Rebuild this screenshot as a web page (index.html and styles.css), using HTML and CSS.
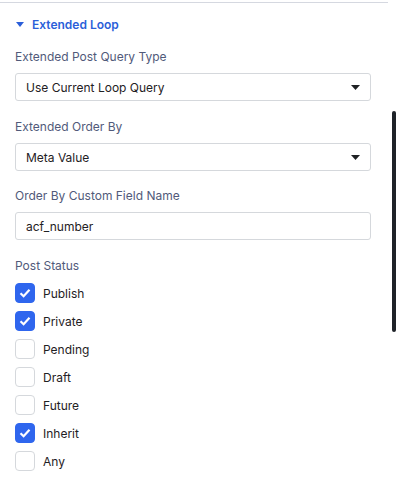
FILE: index.html
```html
<!DOCTYPE html>
<html>
<head>
<meta charset="utf-8">
<link rel="stylesheet" href="styles.css">
</head>
<body>
<div class="panel">
  <div class="section">
    <div class="section-head">
      <svg class="caret" width="8" height="5" viewBox="0 0 8 5"><path d="M0 0H8L4 5Z" fill="#2b5fd9"/></svg>
      <span>Extended Loop</span>
    </div>
    <div class="field">
      <div class="label">Extended Post Query Type</div>
      <div class="select"><span>Use Current Loop Query</span><svg width="9" height="5" viewBox="0 0 9 5"><path d="M0 0H9L4.5 5Z" fill="#1f2124"/></svg></div>
    </div>
    <div class="field">
      <div class="label">Extended Order By</div>
      <div class="select"><span>Meta Value</span><svg width="9" height="5" viewBox="0 0 9 5"><path d="M0 0H9L4.5 5Z" fill="#1f2124"/></svg></div>
    </div>
    <div class="field">
      <div class="label tight">Order By Custom Field Name</div>
      <div class="input">acf_number</div>
    </div>
    <div class="field">
      <div class="label">Post Status</div>
      <div class="checks">
        <div class="check"><span class="box on"><svg width="12" height="10" viewBox="0 0 12 10"><path d="M1.5 5.2L4.6 8.2L10.5 1.8" fill="none" stroke="#fff" stroke-width="2.2"/></svg></span>Publish</div>
        <div class="check"><span class="box on"><svg width="12" height="10" viewBox="0 0 12 10"><path d="M1.5 5.2L4.6 8.2L10.5 1.8" fill="none" stroke="#fff" stroke-width="2.2"/></svg></span>Private</div>
        <div class="check"><span class="box"></span>Pending</div>
        <div class="check"><span class="box"></span>Draft</div>
        <div class="check"><span class="box"></span>Future</div>
        <div class="check"><span class="box on"><svg width="12" height="10" viewBox="0 0 12 10"><path d="M1.5 5.2L4.6 8.2L10.5 1.8" fill="none" stroke="#fff" stroke-width="2.2"/></svg></span>Inherit</div>
        <div class="check"><span class="box"></span>Any</div>
      </div>
    </div>
  </div>
  <div class="scrollbar"></div>
</div>
</body>
</html>
```
FILE: styles.css
```css
* { box-sizing: border-box; }
html, body { margin: 0; padding: 0; background: #fff; }
body {
  font-family: Inter, "Noto Sans", sans-serif;
  font-size: 12px;
  color: #1f2124;
}
.panel {
  position: relative;
  width: 400px;
  height: 483px;
  padding-top: 2px;
}
.section {
  width: 388px;
  border-top: 1px solid #d5d8e0;
  padding: 0 17px 0 15px;
}
.section-head {
  display: flex;
  align-items: center;
  height: 20px;
  margin-top: 11px;
  color: #2b5fd9;
  font-weight: 600;
  font-size: 12px;
}
.caret { margin: 0 8px 0 1px; }
.field { display: flex; flex-direction: column; }
.label {
  color: #515a7a;
  line-height: 20px;
  margin-top: 16px;
  margin-bottom: 6px;
}
.label.tight { margin-top: 15px; }
.section-head + .field .label { margin-top: 13px; }
.select, .input {
  width: 356px;
  height: 28px;
  border: 1px solid #d5d8dc;
  border-radius: 3px;
  display: flex;
  align-items: center;
  justify-content: space-between;
  padding: 0 10px 0 10px;
  color: #1f2124;
}
.checks { display: flex; flex-direction: column; gap: 8px; margin-top: 1px; }
.check { display: flex; align-items: center; height: 20px; gap: 8px; }
.box {
  width: 20px;
  height: 20px;
  border: 1px solid #d5d8dc;
  border-radius: 4px;
  display: flex;
  align-items: center;
  justify-content: center;
}
.box.on { background: #2f66ee; border-color: #2f66ee; }
.scrollbar {
  position: absolute;
  left: 392px;
  top: 111px;
  width: 4px;
  height: 221px;
  border-radius: 2px;
  background: #1f2329;
}
```
